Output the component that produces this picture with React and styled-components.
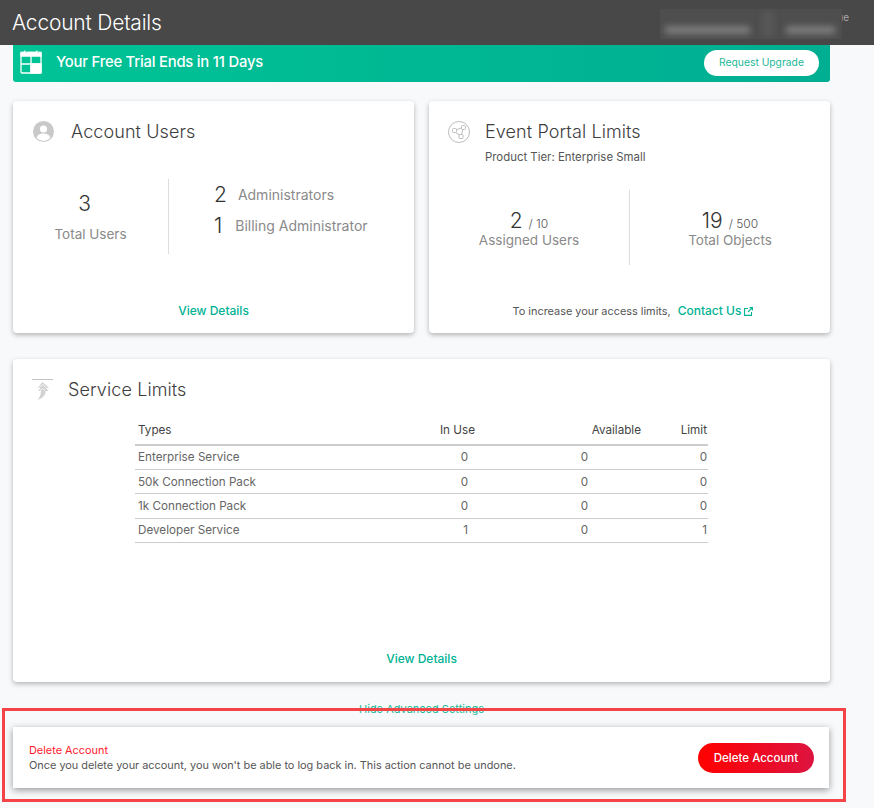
import React from "react";
import styled, { createGlobalStyle } from "styled-components";

const GlobalStyle = createGlobalStyle`
  html, body {
    margin: 0;
    padding: 0;
    background: #f8f9fb;
    font-family: Inter, Roboto, sans-serif;
    color: #444;
  }
  * {
    box-sizing: border-box;
  }
`;

const Page = styled.div`
  position: relative;
  width: 874px;
  height: 808px;
  overflow: hidden;
`;

const Header = styled.header`
  height: 45px;
  background: #484848;
  display: flex;
  align-items: center;
  justify-content: space-between;
  padding: 0 25px 0 12px;
`;

const PageTitle = styled.h1`
  margin: 0 0 1px;
  font-size: 21px;
  font-weight: 300;
  letter-spacing: -0.2px;
  color: #fff;
`;

const UserArea = styled.div`
  display: flex;
  align-items: flex-start;
  height: 30px;
  margin-top: 3px;
`;

const Blurred = styled.div`
  position: relative;
  z-index: 1;
  display: flex;
  align-items: flex-start;
  gap: 12px;
  width: 182px;
  height: 30px;
  padding: 17px 7px 0 5px;
  background: #4e4e4e;
`;

const Smudge = styled.span`
  display: block;
  width: ${(p) => p.$w}px;
  height: 8px;
  background: #7c7c7c;
  filter: blur(3px);
`;

const SmudgeBar = styled.span`
  display: block;
  width: 12px;
  height: 24px;
  margin-top: -14px;
  background: #585858;
  filter: blur(3px);
`;

const Peek = styled.span`
  font-size: 10px;
  line-height: 12px;
  margin: 2px 0 0 -5px;
  color: #aaa;
`;

const Main = styled.main`
  width: 817px;
  margin-left: 13px;
`;

const Banner = styled.div`
  height: 37px;
  display: flex;
  align-items: center;
  justify-content: space-between;
  padding: 0 11px 0 7px;
  border-radius: 0 0 3px 3px;
  background: linear-gradient(90deg, #00c396, #00ae92);
`;

const BannerText = styled.div`
  display: flex;
  align-items: center;
  gap: 14px;
  margin-bottom: 3px;
  font-size: 14.8px;
  font-weight: 500;
  letter-spacing: -0.2px;
  color: #fff;
`;

const PillLight = styled.button`
  width: 115px;
  height: 26px;
  margin-bottom: 1px;
  padding: 0 0 3px;
  border: 0;
  border-radius: 13px;
  background: #fff;
  color: #1cb898;
  font: 400 10.3px Inter, Roboto, sans-serif;
`;

const CardGrid = styled.div`
  display: grid;
  grid-template-columns: 401px 401px;
  gap: 15px;
  margin-top: 19px;
`;

const Card = styled.section`
  position: relative;
  height: ${(p) => p.$h}px;
  margin-top: ${(p) => p.$mt || 0}px;
  padding: 20px 19px 0;
  display: flex;
  flex-direction: column;
  background: #fff;
  border-radius: 4px;
  box-shadow: 0 2px 5px rgba(0, 0, 0, 0.28);
`;

const CardHead = styled.div`
  display: flex;
  align-items: flex-start;
  gap: ${(p) => p.$gap}px;
  min-height: ${(p) => p.$min || 22}px;
`;

const CardTitle = styled.h2`
  margin: 0;
  font-size: 18px;
  line-height: 22px;
  font-weight: 300;
  letter-spacing: 0.1px;
  color: #3d3d3d;
`;

const Tier = styled.div`
  margin-top: 7px;
  font-size: 11.4px;
  line-height: 14px;
  color: #555;
`;

const Stats = styled.div`
  display: flex;
  align-items: center;
  margin: ${(p) => p.$mt}px -19px 0;
  height: 75px;
`;

const StatCol = styled.div`
  flex: 0 0 ${(p) => p.$w}px;
  height: 100%;
  display: flex;
  flex-direction: column;
  align-items: center;
  justify-content: center;
  border-left: ${(p) => (p.$rule ? "1px solid #ddd" : "0")};
`;

const RoleCol = styled.div`
  flex: 0 0 246px;
  height: 100%;
  display: flex;
  flex-direction: column;
  padding-left: 45px;
  border-left: 1px solid #ddd;
`;

const BigNumber = styled.div`
  font-size: 21px;
  line-height: 25px;
  font-weight: 300;
  color: #333;
  margin-right: ${(p) => p.$mr || 0}px;
`;

const Small = styled.span`
  font-size: 12px;
  color: #555;
`;

const StatLabel = styled.div`
  margin-top: ${(p) => p.$mt || 0}px;
  font-size: 13.5px;
  line-height: 16px;
  color: #8a8a8a;
`;

const RoleRow = styled.div`
  display: flex;
  align-items: center;
  gap: ${(p) => p.$gap}px;
  height: 31px;
`;

const RoleLabel = styled.span`
  font-size: 14px;
  color: #8a8a8a;
`;

const CardFoot = styled.div`
  margin-top: auto;
  height: ${(p) => p.$h}px;
  padding-left: ${(p) => p.$pl || 0}px;
  display: flex;
  justify-content: center;
  align-items: flex-start;
  gap: 7px;
  font-size: 10.9px;
  line-height: 14px;
  color: #555;
`;

const GreenLink = styled.a`
  display: inline-flex;
  align-items: center;
  gap: 3px;
  font-size: 12px;
  font-weight: 500;
  color: #00b294;
`;

const Table = styled.table`
  width: 573px;
  margin: 15px auto 0;
  border-collapse: collapse;
  table-layout: fixed;
  font-size: 11.7px;
  color: #666;
`;

const Th = styled.th`
  height: 29px;
  padding: 0 ${(p) => (p.$left ? 0 : 1)}px 1px ${(p) => (p.$left ? 3 : 0)}px;
  text-align: ${(p) => (p.$left ? "left" : "right")};
  font-weight: 400;
  color: #444;
  border-bottom: 2px solid #ccc;
`;

const Td = styled.td`
  height: 24.4px;
  padding: 0 ${(p) => p.$pr || 0}px 0 ${(p) => (p.$left ? 3 : 0)}px;
  text-align: ${(p) => (p.$left ? "left" : "right")};
  border-bottom: 1px solid #ccc;
`;

const DeleteCard = styled.section`
  width: 816px;
  height: 61px;
  margin-top: 11px;
  padding: 0 15px 0 16px;
  display: flex;
  align-items: center;
  justify-content: space-between;
  background: #fff;
  box-shadow: 0 2px 7px rgba(0, 0, 0, 0.4);
`;

const DeleteTitle = styled.div`
  font-size: 10.9px;
  line-height: 15px;
  color: #ff1a2e;
`;

const DeleteText = styled.div`
  font-size: 10.9px;
  line-height: 15px;
  color: #555;
`;

const PillRed = styled.button`
  width: 116px;
  height: 30px;
  padding: 0;
  border: 0;
  border-radius: 15px;
  background: linear-gradient(90deg, #ff0000, #dd1440);
  color: #fff;
  font: 500 11.5px Inter, Roboto, sans-serif;
`;

const ToggleLink = styled.div`
  margin-top: 21px;
  height: 13px;
  text-align: center;
  font-size: 11px;
  line-height: 13px;
  color: #1cb898;
`;

const Annotation = styled.div`
  position: absolute;
  left: 2px;
  top: 708px;
  width: 844px;
  height: 94px;
  border: 3px solid #f54447;
  pointer-events: none;
`;

const CalendarIcon = () => (
  <svg width="22" height="24" viewBox="0 0 22 24" fill="none" stroke="#fff" strokeWidth="1.3">
    <rect x="1" y="2.5" width="20" height="20.500" rx="1" />
    <path d="M1 2.500h20v3.500H1z" fill="#fff" />
    <path d="M5 .5v3M17 .5v3M1 14h20M11 6v17" />
    <path d="M5 .5v2M17 .5v2" stroke="#00c396" strokeWidth=".6" transform="translate(1.200 0)" />
    <rect x="11" y="14" width="10" height="9" fill="#fff" />
  </svg>
);

const UserIcon = () => (
  <svg width="22" height="21" viewBox="-1 0 22 21">
    <circle cx="10.5" cy="10.5" r="10.5" fill="#c9c9c9" />
    <circle cx="10.5" cy="8" r="3.6" fill="#fff" />
    <path d="M3.6 17c1-3.4 3.800-4.500 6.900-4.500s5.900 1.100 6.900 4.500a9.500 9.500 0 0 1-13.800 0z" fill="#fff" />
  </svg>
);

const NodesIcon = () => (
  <svg width="22" height="22" viewBox="0 0 22 22" fill="none" stroke="#bdbdbd" strokeWidth="1">
    <circle cx="11" cy="11" r="10.500" />
    <rect x="4.500" y="7.500" width="4" height="4" rx="1" />
    <rect x="13.500" y="4.500" width="4" height="4" rx="1" />
    <rect x="11" y="13.500" width="4" height="4" rx="1" />
    <path d="M8.500 8.800l5-2M7.500 11.500l3.800 2.300M15 8.500l-1.500 5" />
  </svg>
);

const LimitsIcon = () => (
  <svg width="21" height="22" viewBox="0 0 21 22">
    <path d="M0 .5h21" stroke="#c4c4c4" strokeWidth="1" />
    <path d="M10.500 3l6.500 6h-3l2.500 3h-2.800c-.3 4-3 7.500-8.200 9 2.400-2.500 3.300-5.500 3.500-9H6l2.500-3h-3z" fill="#d2d2d2" />
    <path d="M6.500 9l4-3.500 4 3.500M7.500 12l3-2.500 3 2.500" fill="none" stroke="#fff" strokeWidth=".8" />
  </svg>
);

const ExternalIcon = () => (
  <svg width="9" height="9" viewBox="0 0 9 9" fill="none" stroke="#00b294" strokeWidth="1.100">
    <path d="M4 1.500H.6v6.900h6.900V5M4 5l4.300-4.300M5.500.6h2.900v2.900" />
  </svg>
);

const rows = [
  ["Enterprise Service", 0, 0, 0],
  ["50k Connection Pack", 0, 0, 0],
  ["1k Connection Pack", 0, 0, 0],
  ["Developer Service", 1, 0, 1],
];

export default function App() {
  return (
    <Page>
      <GlobalStyle />
      <Header>
        <PageTitle>Account Details</PageTitle>
        <UserArea>
          <Blurred>
            <Smudge $w={85} />
            <SmudgeBar />
            <Smudge $w={50} />
          </Blurred>
          <Peek>ue</Peek>
        </UserArea>
      </Header>

      <Main>
        <Banner>
          <BannerText>
            <CalendarIcon />
            Your Free Trial Ends in 11 Days
          </BannerText>
          <PillLight>Request Upgrade</PillLight>
        </Banner>

        <CardGrid>
          <Card $h={232}>
            <CardHead $gap={17}>
              <UserIcon />
              <CardTitle>Account Users</CardTitle>
            </CardHead>
            <Stats $mt={36}>
              <StatCol $w={155}>
                <BigNumber $mr={12}>3</BigNumber>
                <StatLabel $mt={10}>Total Users</StatLabel>
              </StatCol>
              <RoleCol>
                <RoleRow $gap={11}>
                  <BigNumber>2</BigNumber>
                  <RoleLabel>Administrators</RoleLabel>
                </RoleRow>
                <RoleRow $gap={13}>
                  <BigNumber>1</BigNumber>
                  <RoleLabel>Billing Administrator</RoleLabel>
                </RoleRow>
              </RoleCol>
            </Stats>
            <CardFoot $h={29}>
              <GreenLink>View Details</GreenLink>
            </CardFoot>
          </Card>

          <Card $h={232}>
            <CardHead $gap={15} $min={48}>
              <NodesIcon />
              <div>
                <CardTitle>Event Portal Limits</CardTitle>
                <Tier>Product Tier: Enterprise Small</Tier>
              </div>
            </CardHead>
            <Stats $mt={21}>
              <StatCol $w={200}>
                <BigNumber>
                  2 <Small>/ 10</Small>
                </BigNumber>
                <StatLabel $mt={-4}>Assigned Users</StatLabel>
              </StatCol>
              <StatCol $w={201} $rule>
                <BigNumber>
                  19 <Small>/ 500</Small>
                </BigNumber>
                <StatLabel $mt={-4}>Total Objects</StatLabel>
              </StatCol>
            </Stats>
            <CardFoot $h={29} $pl={7}>
              To increase your access limits,
              <GreenLink>
                Contact Us
                <ExternalIcon />
              </GreenLink>
            </CardFoot>
          </Card>
        </CardGrid>

        <Card $h={323} $mt={26}>
          <CardHead $gap={15}>
            <LimitsIcon />
            <CardTitle>Service Limits</CardTitle>
          </CardHead>
          <Table>
            <colgroup>
              <col style={{ width: 261 }} />
              <col style={{ width: 80 }} />
              <col style={{ width: 166 }} />
              <col style={{ width: 66 }} />
            </colgroup>
            <thead>
              <tr>
                <Th $left>Types</Th>
                <Th>In Use</Th>
                <Th>Available</Th>
                <Th>Limit</Th>
              </tr>
            </thead>
            <tbody>
              {rows.map((r) => (
                <tr key={r[0]}>
                  <Td $left>{r[0]}</Td>
                  <Td $pr={8}>{r[1]}</Td>
                  <Td $pr={54}>{r[2]}</Td>
                  <Td $pr={1}>{r[3]}</Td>
                </tr>
              ))}
            </tbody>
          </Table>
          <CardFoot $h={30}>
            <GreenLink>View Details</GreenLink>
          </CardFoot>
        </Card>

        <ToggleLink>Hide Advanced Settings</ToggleLink>

        <DeleteCard>
          <div>
            <DeleteTitle>Delete Account</DeleteTitle>
            <DeleteText>
              Once you delete your account, you won't be able to log back in. This action cannot be undone.
            </DeleteText>
          </div>
          <PillRed>Delete Account</PillRed>
        </DeleteCard>
      </Main>

      <Annotation />
    </Page>
  );
}
